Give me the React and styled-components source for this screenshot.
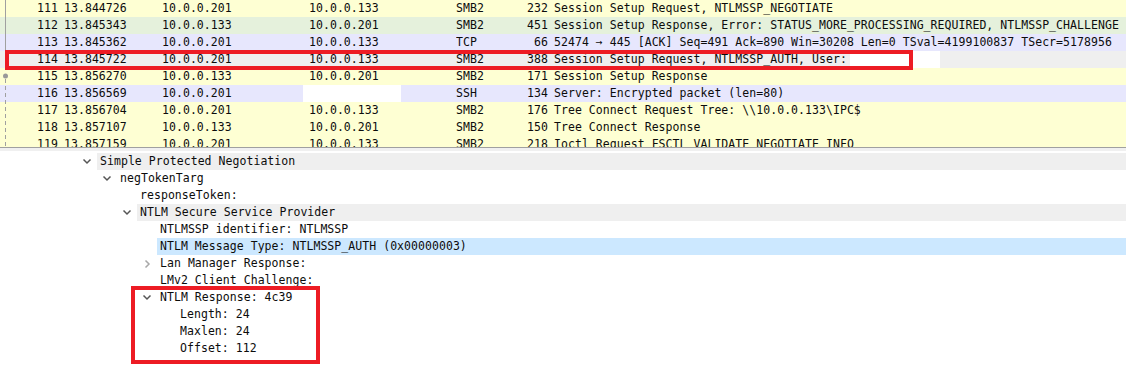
import React from "react";
import styled, { createGlobalStyle } from "styled-components";

const Global = createGlobalStyle`
  html, body { margin: 0; padding: 0; background: #fff; }
  body {
    font-family: "DejaVu Sans Mono", "Liberation Mono", monospace;
    font-size: 11.5px;
    letter-spacing: 0.05px;
    color: #0c0c0c;
  }
`;

const Page = styled.div`
  width: 1126px;
  height: 378px;
  position: relative;
  overflow: hidden;
  display: flex;
  flex-direction: column;
`;

const PacketList = styled.div`
  height: 147px;
  overflow: hidden;
  border-bottom: 1px solid #a0a0a0;
  position: relative;
  flex: 0 0 auto;
`;

const COLORS = {
  smb: "#feffd3",
  ok: "#e5f1dc",
  tcp: "#e7e7fd",
  sel: "#efefef",
};

const Row = styled.div`
  position: relative;
  display: grid;
  grid-template-columns: 58px 104px 147px 147px 54px 38px 1fr;
  height: 17px;
  line-height: 17px;
  background: ${({ tone }) => COLORS[tone]};
  white-space: nowrap;
`;

const Cell = styled.div`
  overflow: hidden;
  text-align: ${({ right }) => (right ? "right" : "left")};
  padding-left: ${({ pad }) => (pad ? 6 : 0)}px;
`;

const Redact = styled.div`
  position: absolute;
  top: 0;
  bottom: 0;
  background: #fff;
`;

const Splitter = styled.div`
  height: 3px;
  background: #f0f0f0;
  flex: 0 0 auto;
`;

const Tree = styled.div`
  padding-top: 2px;
  flex: 1;
  position: relative;
`;

const TreeRow = styled.div`
  display: flex;
  height: 17px;
  line-height: 17px;
  padding-left: ${({ level }) => 77 + level * 20}px;
`;

const Toggle = styled.div`
  width: 20px;
  flex: 0 0 20px;
  display: flex;
  align-items: center;
  justify-content: center;
`;

const Label = styled.div`
  flex: 1;
  padding-left: 3px;
  white-space: nowrap;
  background: ${({ hl }) =>
    hl === "gray" ? "#efefef" : hl === "blue" ? "#cce8ff" : "transparent"};
`;

const RedBox = styled.div`
  position: absolute;
  border: 4px solid #ed1c24;
  pointer-events: none;
`;

const Thread = styled.svg`
  position: absolute;
  left: 0;
  top: 0;
`;

const packets = [
  ["111", "13.844726", "10.0.0.201", "10.0.0.133", "SMB2", "232", "Session Setup Request, NTLMSSP_NEGOTIATE", "smb"],
  ["112", "13.845343", "10.0.0.133", "10.0.0.201", "SMB2", "451", "Session Setup Response, Error: STATUS_MORE_PROCESSING_REQUIRED, NTLMSSP_CHALLENGE", "ok"],
  ["113", "13.845362", "10.0.0.201", "10.0.0.133", "TCP", "66", "52474 \u2192 445 [ACK] Seq=491 Ack=890 Win=30208 Len=0 TSval=4199100837 TSecr=5178956", "tcp"],
  ["114", "13.845722", "10.0.0.201", "10.0.0.133", "SMB2", "388", "Session Setup Request, NTLMSSP_AUTH, User:", "sel"],
  ["115", "13.856270", "10.0.0.133", "10.0.0.201", "SMB2", "171", "Session Setup Response", "smb"],
  ["116", "13.856569", "10.0.0.201", "", "SSH", "134", "Server: Encrypted packet (len=80)", "tcp"],
  ["117", "13.856704", "10.0.0.201", "10.0.0.133", "SMB2", "176", "Tree Connect Request Tree: \\\\10.0.0.133\\IPC$", "smb"],
  ["118", "13.857107", "10.0.0.133", "10.0.0.201", "SMB2", "150", "Tree Connect Response", "smb"],
  ["119", "13.857159", "10.0.0.201", "10.0.0.133", "SMB2", "218", "Ioctl Request FSCTL_VALIDATE_NEGOTIATE_INFO", "smb"],
];

const tree = [
  { level: 0, open: true, text: "Simple Protected Negotiation", hl: "gray" },
  { level: 1, open: true, text: "negTokenTarg" },
  { level: 2, text: "responseToken:" },
  { level: 2, open: true, text: "NTLM Secure Service Provider", hl: "gray" },
  { level: 3, text: "NTLMSSP identifier: NTLMSSP" },
  { level: 3, text: "NTLM Message Type: NTLMSSP_AUTH (0x00000003)", hl: "blue" },
  { level: 3, closed: true, text: "Lan Manager Response:" },
  { level: 3, text: "LMv2 Client Challenge:" },
  { level: 3, open: true, text: "NTLM Response: 4c39" },
  { level: 4, text: "Length: 24" },
  { level: 4, text: "Maxlen: 24" },
  { level: 4, text: "Offset: 112" },
];

function Chevron({ open }) {
  if (open) {
    return (
      <svg width="10" height="7" viewBox="0 0 10 7">
        <polyline points="1.5,1.5 5,5 8.5,1.5" fill="none" stroke="#555" strokeWidth="1.5" />
      </svg>
    );
  }
  return (
    <svg width="7" height="10" viewBox="0 0 7 10">
      <polyline points="1.5,1.5 5,5 1.5,8.5" fill="none" stroke="#a8a8a8" strokeWidth="1.5" />
    </svg>
  );
}

export default function App() {
  return (
    <Page>
      <Global />
      <PacketList>
        {packets.map(p => (
          <Row key={p[0]} tone={p[7]}>
            <Cell right>{p[0]}</Cell>
            <Cell pad>{p[1]}</Cell>
            <Cell>{p[2]}</Cell>
            <Cell>{p[3]}</Cell>
            <Cell>{p[4]}</Cell>
            <Cell right>{p[5]}</Cell>
            <Cell pad>{p[6]}</Cell>
            {p[0] === "116" && <Redact style={{ left: 303, width: 98 }} />}
            {p[0] === "114" && <Redact style={{ left: 850, width: 90 }} />}
          </Row>
        ))}
        <Thread width="12" height="147">
          <line x1="5.5" y1="0" x2="5.5" y2="68" stroke="#a0a0a0" strokeWidth="1" />
          <circle cx="5.5" cy="76" r="2.5" fill="#999" />
          <line x1="5.5" y1="79" x2="5.5" y2="147" stroke="#a0a0a0" strokeWidth="1" strokeDasharray="4 3" />
        </Thread>
        <RedBox style={{ left: 5, top: 50, width: 900, height: 12 }} />
      </PacketList>
      <Splitter />
      <Tree>
        {tree.map((t, i) => (
          <TreeRow key={i} level={t.level}>
            <Toggle>{t.open ? <Chevron open /> : t.closed ? <Chevron /> : null}</Toggle>
            <Label hl={t.hl}>{t.text}</Label>
          </TreeRow>
        ))}
        <RedBox style={{ left: 131, top: 135, width: 181, height: 70 }} />
      </Tree>
    </Page>
  );
}
